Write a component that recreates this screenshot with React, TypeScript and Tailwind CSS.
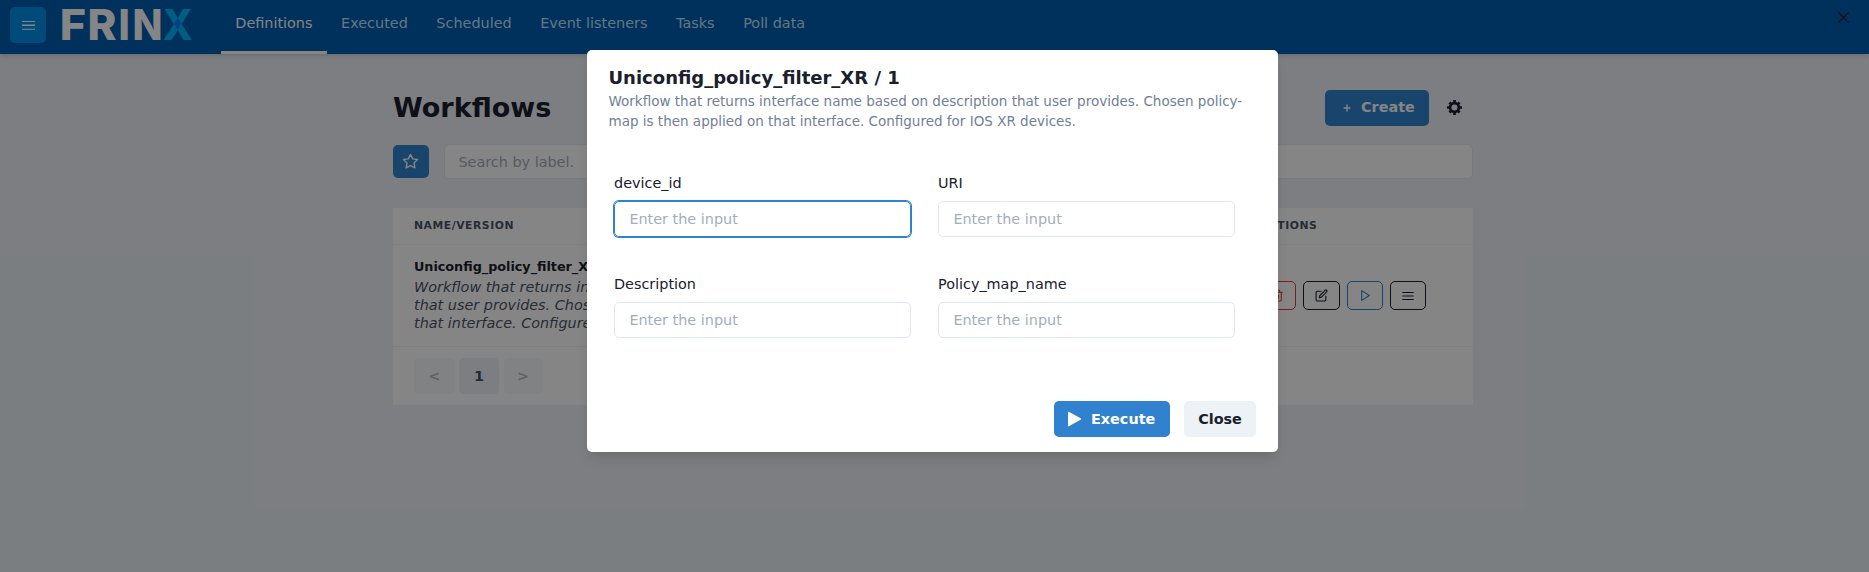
import type { ReactNode } from "react";
import { FiEdit, FiMenu, FiPlay, FiStar, FiTrash2 } from "react-icons/fi";

const tabs = ["Definitions", "Executed", "Scheduled", "Event listeners", "Tasks", "Poll data"];
const fields = ["device_id", "URI", "Description", "Policy_map_name"];

function Logo() {
  return (
    <svg className="ml-[14px] h-[50px] w-[136px] shrink-0" viewBox="60 0 136 50" role="img" aria-label="FRINX">
      <g fontFamily="Inter" fontWeight="800" fontSize="42">
        <text y="39.5" fill="#fff" x="59.8" textLength="26.3" lengthAdjust="spacingAndGlyphs">F</text>
        <text y="39.5" fill="#fff" x="87.5" textLength="29" lengthAdjust="spacingAndGlyphs">R</text>
        <text y="39.5" fill="#fff" x="118.5" textLength="11.3" lengthAdjust="spacingAndGlyphs">I</text>
        <text y="39.5" fill="#fff" x="132.6" textLength="30" lengthAdjust="spacingAndGlyphs">N</text>
        <text y="39.5" fill="#00b4ff" x="162.7" textLength="30" lengthAdjust="spacingAndGlyphs">X</text>
      </g>
      <path d="M177.8 17.2l3.7 6.2-3.7 6.2-3.7-6.2z" fill="#0080ff" />
    </svg>
  );
}

function SettingsIcon() {
  return (
    <svg viewBox="0 0 24 24" className="size-[15px]" fill="none" stroke="currentColor" strokeWidth="4.3">
      <circle cx="12" cy="12" r="7" />
      <path d="M12 0v4M12 20v4M0 12h4M20 12h4M3.9 3.9l2.5 2.5M17.6 17.6l2.5 2.5M3.9 20.1l2.5-2.5M17.6 6.4l2.5-2.5" />
    </svg>
  );
}

function Header() {
  return (
    <header className="relative flex h-[54px] items-start bg-[#005cb1] shadow-[0_3px_5px_-1px_rgba(0,0,0,0.1),0_2px_3px_-1px_rgba(0,0,0,0.06)]">
      <button className="mt-[7px] ml-[10px] flex size-9 items-center justify-center rounded-[5px] bg-[#0090e8] text-white">
        <svg viewBox="0 0 13 9" className="h-[9px] w-[13px]" fill="currentColor">
          <path d="M0 0h13v1H0zM0 3.6h13v1.3H0zM0 7.7h13v1H0z" />
        </svg>
      </button>
      <Logo />
      <nav className="ml-[25px] flex h-[54px]">
        {tabs.map((tab, i) => (
          <a
            key={tab}
            className={
              i === 0
                ? "flex items-center border-b-[3px] border-white px-[14.3px] pb-[3px] text-white"
                : "flex items-center border-b-[3px] border-transparent px-[14.3px] pb-[3px] text-[#bee3f8]"
            }
          >
            {tab}
          </a>
        ))}
      </nav>
    </header>
  );
}

function ActionButton({ className, children }: { className: string; children: ReactNode }) {
  return <button className={`flex h-[29px] items-center justify-center rounded-[5px] border ${className}`}>{children}</button>;
}

function WorkflowTable() {
  return (
    <section className="mt-[29px] h-[197px] bg-white">
      <div className="flex h-[37px] items-center border-b border-[#edf2f7] pl-[21px] text-[10.8px] font-bold tracking-[0.05em] text-[#4a5568]">
        <span className="w-[846px]">NAME/VERSION</span>
        <span>ACTIONS</span>
      </div>
      <div className="flex h-[102px] items-center justify-between border-b border-[#edf2f7] pr-[47px] pl-[21px]">
        <div className="w-[480px] pb-[3px]">
          <div className="text-[12.75px] leading-[19px] font-bold">Uniconfig_policy_filter_XR / 1</div>
          <p className="mt-[2px] leading-[18px] text-[#4a5568] italic">
            Workflow that returns interface name based on description
            <br />
            that user provides. Chosen policy-map is then applied on
            <br />
            that interface. Configured for IOS XR devices.
          </p>
        </div>
        <div className="flex gap-[7px]">
          <ActionButton className="w-[37px] border-[#e53e3e] text-[#e53e3e]"><FiTrash2 size={13} /></ActionButton>
          <ActionButton className="w-[37px] border-[#1a202c]"><FiEdit size={13} /></ActionButton>
          <ActionButton className="w-9 border-[#3182ce] text-[#3182ce]"><FiPlay size={13} /></ActionButton>
          <ActionButton className="w-9 border-[#1a202c]"><FiMenu size={14} /></ActionButton>
        </div>
      </div>
      <div className="flex gap-[4.5px] pt-[11px] pl-[21px] font-bold text-[#4a5568]">
        <button className="h-9 w-[40.5px] rounded-[5px] bg-[#edf2f7] pt-px font-semibold opacity-40">&lt;</button>
        <button className="h-9 w-10 rounded-[5px] bg-[#edf2f7] pt-px">1</button>
        <button className="h-9 w-[39px] rounded-[5px] bg-[#edf2f7] pt-px font-semibold opacity-40">&gt;</button>
      </div>
    </section>
  );
}

function WorkflowsPage() {
  return (
    <main className="ml-[393px] w-[1080px]">
      <div className="flex h-[72px] items-end">
        <h1 className="mb-[-2px] flex-1 text-[27px] leading-[40px] font-bold">Workflows</h1>
        <button className="flex h-9 w-[104px] items-center gap-[10px] rounded-[5px] bg-[#3182ce] pl-[18px] font-bold text-white">
          <svg viewBox="0 0 8 8" className="size-2" fill="none" stroke="currentColor" strokeWidth="1.4" strokeLinecap="round">
            <path d="M4 1v6M1 4h6" />
          </svg>
          <span className="pb-px">Create</span>
        </button>
        <div className="mr-[11px] ml-[18px] flex h-9 items-center pb-px"><SettingsIcon /></div>
      </div>
      <div className="mt-[18px] flex h-[35px] items-center gap-[15px]">
        <button className="flex h-[33px] w-9 items-center justify-center rounded-[5px] bg-[#3182ce] pr-px text-white"><FiStar size={17} /></button>
        <input placeholder="Search by label." className="mr-[0.5px] h-[35px] flex-1 rounded-[5px] border border-[#e2e8f0] bg-white px-[13.4px] placeholder:text-[#a0aec0]" />
      </div>
      <WorkflowTable />
    </main>
  );
}

function ExecuteModal() {
  return (
    <div role="dialog" className="mt-[50px] ml-[587px] h-[402px] w-[691px] rounded-[5px] bg-white px-[22px] pt-[16px] shadow-[0_9px_14px_-3px_rgba(0,0,0,0.1),0_4px_6px_-2px_rgba(0,0,0,0.05)]">
      <h2 className="-ml-[0.5px] text-[18px] leading-[24px] font-bold">Uniconfig_policy_filter_XR / 1</h2>
      <p className="mt-px -ml-[0.5px] text-[13.5px] leading-[20px] whitespace-nowrap text-[#718096]">
        Workflow that returns interface name based on description that user provides. Chosen policy-
        <br />
        map is then applied on that interface. Configured for IOS XR devices.
      </p>
      <div className="mt-[41px] ml-[5px] grid w-[621px] grid-cols-2 gap-x-[27px] gap-y-[36px]">
        {fields.map((field, i) => (
          <label key={field} className="flex h-[65px] flex-col justify-between">
            <span className="leading-[22px]">{field}</span>
            <input
              placeholder="Enter the input"
              className={
                i === 0
                  ? "h-9 w-full rounded-[5px] border border-[#3182ce] px-[14.4px] shadow-[0_0_0_1px_#3182ce] outline-none placeholder:text-[#a0aec0]"
                  : "h-9 w-full rounded-[5px] border border-[#e2e8f0] px-[14.4px] outline-none placeholder:text-[#a0aec0]"
              }
            />
          </label>
        ))}
      </div>
      <div className="mt-[63px] flex justify-end gap-[14px] font-bold">
        <button className="flex h-9 w-[116px] items-center gap-[9px] rounded-[5px] bg-[#3182ce] pl-[14px] text-white">
          <svg viewBox="0 0 14 16" className="h-4 w-[14px]" fill="currentColor">
            <path d="M0 1.6Q0 .3 1.2 .9L12.6 7.2Q14 8 12.6 8.8L1.2 15.1Q0 15.7 0 14.4z" />
          </svg>
          <span className="pt-px">Execute</span>
        </button>
        <button className="h-9 w-[72px] rounded-[5px] bg-[#edf2f7] pt-px">Close</button>
      </div>
    </div>
  );
}

export default function App() {
  return (
    <div className="relative h-[572px] w-[1869px] overflow-hidden bg-[#edf2f7] font-['DejaVu_Sans',sans-serif] text-[14.4px] text-[#1a202c]">
      <Header />
      <WorkflowsPage />
      <div className="absolute inset-0 flex items-start justify-between bg-black/48">
        <ExecuteModal />
        <button className="mt-[12px] mr-[20px]">
          <svg viewBox="0 0 11 11" className="size-[11px]" fill="none" stroke="#10141c" strokeWidth="1.5">
            <path d="M.3 .3l10.4 10.4M10.7 .3L.3 10.7" />
          </svg>
        </button>
      </div>
    </div>
  );
}
